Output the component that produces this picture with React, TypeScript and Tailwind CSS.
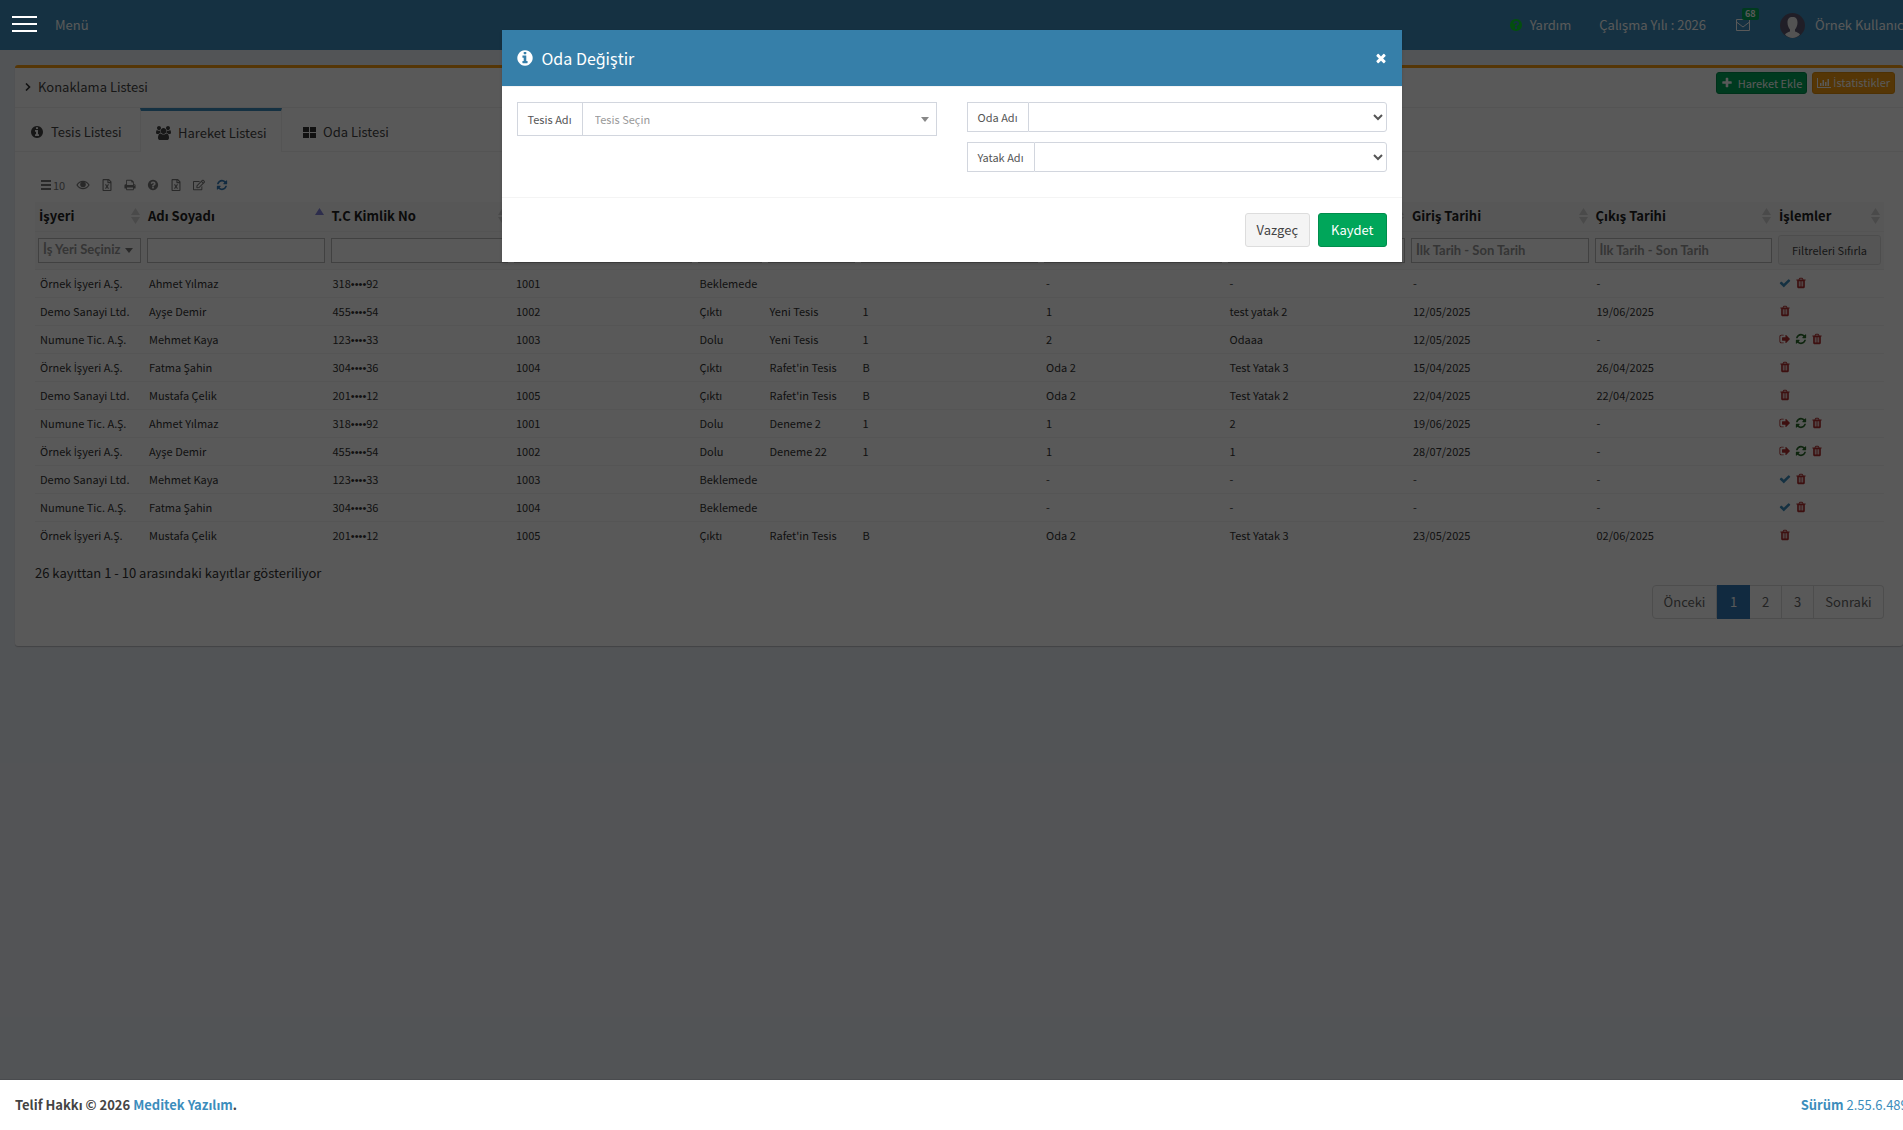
import React from "react";
import { FaRegFileExcel, FaRegEdit } from "react-icons/fa";

const P = {
  refresh:
    "M1639 1056q0 5-1 7-64 268-268 434.5t-478 166.5q-146 0-282.5-55t-243.5-157l-129 129q-19 19-45 19t-45-19-19-45v-448q0-26 19-45t45-19h448q26 0 45 19t19 45-19 45l-137 137q71 66 161 102t187 36q134 0 250-65t186-179q11-17 53-117 8-23 30-23h192q13 0 22.5 9.5t9.5 22.5zm25-800v448q0 26-19 45t-45 19h-448q-26 0-45-19t-19-45 19-45l138-138q-148-137-349-137-134 0-250 65t-186 179q-11 17-53 117-8 23-30 23h-199q-13 0-22.5-9.5t-9.5-22.5v-7q65-268 270-434.5t480-166.5q146 0 284 55.5t245 156.5l130-129q19-19 45-19t45 19 19 45z",
  signOut:
    "M704 1440q0 4 1 20t.5 26.5-3 23.5-10 19.5-20.5 6.5h-320q-119 0-203.5-84.5t-84.5-203.5v-704q0-119 84.5-203.5t203.5-84.5h320q13 0 22.5 9.5t9.5 22.5q0 4 1 20t.5 26.5-3 23.5-10 19.5-20.5 6.5h-320q-66 0-113 47t-47 113v704q0 66 47 113t113 47h312l11.5 1 11.5 3 8 5.5 7 9 2 13.5zm928-544q0 26-19 45l-544 544q-19 19-45 19t-45-19-19-45v-288h-448q-26 0-45-19t-19-45v-384q0-26 19-45t45-19h448v-288q0-26 19-45t45-19 45 19l544 544q19 19 19 45z",
  trash:
    "M704 1376v-704q0-14-9-23t-23-9h-64q-14 0-23 9t-9 23v704q0 14 9 23t23 9h64q14 0 23-9t9-23zm256 0v-704q0-14-9-23t-23-9h-64q-14 0-23 9t-9 23v704q0 14 9 23t23 9h64q14 0 23-9t9-23zm256 0v-704q0-14-9-23t-23-9h-64q-14 0-23 9t-9 23v704q0 14 9 23t23 9h64q14 0 23-9t9-23zm-544-992h448l-48-117q-7-9-17-11h-317q-10 2-17 11zm928 32v64q0 14-9 23t-23 9h-96v948q0 83-47 143.5t-113 60.5h-832q-66 0-113-58.5t-47-141.5v-952h-96q-14 0-23-9t-9-23v-64q0-14 9-23t23-9h309l70-167q15-37 54-63t79-26h320q40 0 79 26t54 63l70 167h309q14 0 23 9t9 23z",
  check:
    "M1671 566q0 40-28 68l-724 724-136 136q-28 28-68 28t-68-28l-136-136-362-362q-28-28-28-68t28-68l136-136q28-28 68-28t68 28l294 295 656-657q28-28 68-28t68 28l136 136q28 28 28 68z",
  times:
    "M1490 1322q0 40-28 68l-136 136q-28 28-68 28t-68-28l-294-294-294 294q-28 28-68 28t-68-28l-136-136q-28-28-28-68t28-68l294-294-294-294q-28-28-28-68t28-68l136-136q28-28 68-28t68 28l294 294 294-294q28-28 68-28t68 28l136 136q28 28 28 68t-28 68l-294 294 294 294q28 28 28 68z",
  plus:
    "M1600 736v192q0 40-28 68t-68 28h-416v416q0 40-28 68t-68 28h-192q-40 0-68-28t-28-68v-416h-416q-40 0-68-28t-28-68v-192q0-40 28-68t68-28h416v-416q0-40 28-68t68-28h192q40 0 68 28t28 68v416h416q40 0 68 28t28 68z",
  info:
    "M1152 1376v-160q0-14-9-23t-23-9h-96v-512q0-14-9-23t-23-9h-320q-14 0-23 9t-9 23v160q0 14 9 23t23 9h96v320h-96q-14 0-23 9t-9 23v160q0 14 9 23t23 9h448q14 0 23-9t9-23zm-128-896v-160q0-14-9-23t-23-9h-192q-14 0-23 9t-9 23v160q0 14 9 23t23 9h192q14 0 23-9t9-23zm640 416q0 209-103 385.5t-279.5 279.5-385.5 103-385.5-103-279.5-279.5-103-385.5 103-385.5 279.5-279.5 385.5-103 385.5 103 279.5 279.5 103 385.5z",
  question:
    "M1024 1376v-192q0-14-9-23t-23-9h-192q-14 0-23 9t-9 23v192q0 14 9 23t23 9h192q14 0 23-9t9-23zm256-672q0-88-55.5-163t-138.5-116-170-41q-243 0-371 213-15 24 8 42l132 100q7 6 19 6 16 0 25-12 53-68 86-92 34-24 86-24 48 0 85.5 26t37.5 59q0 38-20 61t-68 45q-63 28-115.5 86.5t-52.5 125.5v36q0 14 9 23t23 9h192q14 0 23-9t9-23q0-19 21.5-49.5t54.5-49.5q32-18 49-28.5t46-35 44.5-48 28-60.5 12.5-81zm384 192q0 209-103 385.5t-279.5 279.5-385.5 103-385.5-103-279.5-279.5-103-385.5 103-385.5 279.5-279.5 385.5-103 385.5 103 279.5 279.5 103 385.5z",
  print:
    "M448 1536h896v-256h-896v256zm0-640h896v-384h-160q-40 0-68-28t-28-68v-160h-640v640zm1152 64q0-26-19-45t-45-19-45 19-19 45 19 45 45 19 45-19 19-45zm128 0v416q0 13-9.5 22.5t-22.5 9.5h-224v160q0 40-28 68t-68 28h-960q-40 0-68-28t-28-68v-160h-224q-13 0-22.5-9.5t-9.5-22.5v-416q0-79 56.5-135.5t135.5-56.5h64v-544q0-40 28-68t68-28h672q40 0 88 20t76 48l152 152q28 28 48 76t20 88v256h64q79 0 135.5 56.5t56.5 135.5z",
};

function Icon({ name, className }: { name: keyof typeof P; className: string }) {
  return (
    <svg viewBox="0 0 1792 1792" fill="currentColor" aria-hidden="true" className={`shrink-0 ${className}`}>
      <path d={P[name]} />
    </svg>
  );
}

function Users() {
  return (
    <svg viewBox="64 0 1920 1792" fill="currentColor" aria-hidden="true" className="h-[14px] w-[15px] shrink-0">
      <path d="M657 896q-162 5-265 128h-134q-82 0-138-40.5t-56-118.5q0-353 124-353 6 0 43.500 21t97.500 42.500 119 21.500q67 0 133-23-5 37-5 66 0 139 81 256zm1071 637q0 120-73 189.500t-194 69.500h-874q-121 0-194-69.500t-73-189.500q0-53 3.500-103.500t14-109 26.500-108.500 43-97.500 62-81 85.500-53.500 111.500-20q10 0 43 21.500t73 48 107 48 135 21.500 135-21.500 107-48 73-48 43-21.500q61 0 111.500 20t85.500 53.500 62 81 43 97.500 26.500 108.500 14 109 3.500 103.500zm-1024-1277q0 106-75 181t-181 75-181-75-75-181 75-181 181-75 181 75 75 181zm704 384q0 159-112.500 271.500t-271.500 112.500-271.500-112.500-112.500-271.500 112.500-271.500 271.500-112.500 271.500 112.500 112.500 271.500zm576 225q0 78-56 118.500t-138 40.500h-134q-103-123-265-128 81-117 81-256 0-29-5-66 66 23 133 23 59 0 119-21.500t97.500-42.500 43.500-21q124 0 124 353zm-128-609q0 106-75 181t-181 75-181-75-75-181 75-181 181-75 181 75 75 181z" />
    </svg>
  );
}

function Eye() {
  return (
    <svg viewBox="0 0 14 10" aria-hidden="true" className="h-[10px] w-[14px]">
      <path d="M1 5C4 .2 10 .2 13 5 10 9.800 4 9.800 1 5z" fill="none" stroke="currentColor" strokeWidth="1.200" />
      <circle cx="7" cy="4.500" r="2.800" fill="currentColor" />
    </svg>
  );
}

/* The CJK face has no dotted capital I, and its bullet is full width. */
function Txt({ children }: { children: string }) {
  return (
    <>
      {children.split(/(İ|•+)/).map((part, i) => {
        if (part === "İ") return <span key={i} className="font-['Open_Sans','Noto_Sans',sans-serif]">İ</span>;
        if (part.startsWith("•")) return <span key={i} className="font-['Liberation_Sans',sans-serif]">{part}</span>;
        return part;
      })}
    </>
  );
}

type Row = { firm: string; name: string; tc: string; no: string; status: string; cells: string[]; acts: "new" | "done" | "in" };

const W = ["", "", "-", "-", "-", "-"];
const rows: Row[] = [
  { firm: "Örnek İşyeri A.Ş.", name: "Ahmet Yılmaz", tc: "318••••92", no: "1001", status: "Beklemede", cells: W, acts: "new" },
  { firm: "Demo Sanayi Ltd.", name: "Ayşe Demir", tc: "455••••54", no: "1002", status: "Çıktı", cells: ["Yeni Tesis", "1", "1", "test yatak 2", "12/05/2025", "19/06/2025"], acts: "done" },
  { firm: "Numune Tic. A.Ş.", name: "Mehmet Kaya", tc: "123••••33", no: "1003", status: "Dolu", cells: ["Yeni Tesis", "1", "2", "Odaaa", "12/05/2025", "-"], acts: "in" },
  { firm: "Örnek İşyeri A.Ş.", name: "Fatma Şahin", tc: "304••••36", no: "1004", status: "Çıktı", cells: ["Rafet'in Tesis", "B", "Oda 2", "Test Yatak 3", "15/04/2025", "26/04/2025"], acts: "done" },
  { firm: "Demo Sanayi Ltd.", name: "Mustafa Çelik", tc: "201••••12", no: "1005", status: "Çıktı", cells: ["Rafet'in Tesis", "B", "Oda 2", "Test Yatak 2", "22/04/2025", "22/04/2025"], acts: "done" },
  { firm: "Numune Tic. A.Ş.", name: "Ahmet Yılmaz", tc: "318••••92", no: "1001", status: "Dolu", cells: ["Deneme 2", "1", "1", "2", "19/06/2025", "-"], acts: "in" },
  { firm: "Örnek İşyeri A.Ş.", name: "Ayşe Demir", tc: "455••••54", no: "1002", status: "Dolu", cells: ["Deneme 22", "1", "1", "1", "28/07/2025", "-"], acts: "in" },
  { firm: "Demo Sanayi Ltd.", name: "Mehmet Kaya", tc: "123••••33", no: "1003", status: "Beklemede", cells: W, acts: "new" },
  { firm: "Numune Tic. A.Ş.", name: "Fatma Şahin", tc: "304••••36", no: "1004", status: "Beklemede", cells: W, acts: "new" },
  { firm: "Örnek İşyeri A.Ş.", name: "Mustafa Çelik", tc: "201••••12", no: "1005", status: "Çıktı", cells: ["Rafet'in Tesis", "B", "Oda 2", "Test Yatak 3", "23/05/2025", "02/06/2025"], acts: "done" },
];

const heads = ["İşyeri", "Adı Soyadı", "T.C Kimlik No", "Sicil No", "Durum", "Tesis", "Blok", "Oda Adı", "Yatak Adı", "Giriş Tarihi", "Çıkış Tarihi", "İşlemler"];

function Sort({ active }: { active: boolean }) {
  return (
    <svg viewBox="0 0 9 16" aria-hidden="true" className="h-4 w-[9px] shrink-0">
      <path d="M0 7 4.500 0 9 7z" fill={active ? "#8080d9" : "#d4d4d4"} />
      {!active && <path d="M0 9h9l-4.500 7z" fill="#d4d4d4" />}
    </svg>
  );
}

function Act({ name, label, className }: { name: keyof typeof P; label: string; className: string }) {
  return (
    <button type="button" aria-label={label} className={className}>
      <Icon name={name} className="size-3" />
    </button>
  );
}

function Actions({ kind }: { kind: Row["acts"] }) {
  return (
    <div className="flex items-center gap-1">
      {kind === "new" && <Act name="check" label="Onayla" className="text-[#3c8dbc]" />}
      {kind === "in" && <Act name="signOut" label="Çıkış" className="text-[#b03030]" />}
      {kind === "in" && <Act name="refresh" label="Oda Değiştir" className="text-[#2a6a2a]" />}
      <Act name="trash" label="Sil" className="text-[#b03030]" />
    </div>
  );
}

const field = "block h-[25px] w-full border border-[#bbb] bg-white px-1 font-['Lato',sans-serif] text-[13px] font-bold placeholder:text-[#999]";

function Filter({ i }: { i: number }) {
  if (i === 0)
    return (
      <div className="relative">
        <select aria-label="İş Yeri" className={`${field} appearance-none text-[#999]`}>
          <option>İş Yeri Seçiniz</option>
        </select>
        <svg viewBox="0 0 8 5" aria-hidden="true" className="pointer-events-none absolute top-[10px] right-2 h-[5px] w-2">
          <path d="M0 0h8l-4 5z" fill="#777" />
        </svg>
      </div>
    );
  if (i === 11)
    return (
      <button type="button" className="block h-[30px] w-full rounded-[3px] border border-[#ddd] bg-[#f4f4f4] text-[11px] font-normal text-[#444]">
        Filtreleri Sıfırla
      </button>
    );
  return <input aria-label={heads[i]} placeholder={i > 8 ? "İlk Tarih - Son Tarih" : ""} className={field} />;
}

function Header() {
  return (
    <header className="flex h-[50px] items-center justify-between bg-[#3c8dbc] text-[13px] text-white">
      <span className="pl-[55px]">Menü</span>
      <nav className="flex items-center pr-[11px]">
        <a href="#yardim" className="flex items-center gap-[7px]">
          <Icon name="question" className="size-[14px] text-[#0be02c]" />
          Yardım
        </a>
        <span className="ml-7">Çalışma Yılı : 2026</span>
        <a href="#mesajlar" aria-label="Mesajlar" className="relative ml-[30px]">
          <svg viewBox="0 0 14 12" aria-hidden="true" className="h-3 w-[14px]">
            <path d="M.5.5h13v11H.5zM.5 3 7 8l6.500-5" fill="none" stroke="#fff" />
          </svg>
          <span className="absolute -top-[11px] left-[6px] rounded-[2px] bg-[#00a65a] px-[3px] text-[9px] leading-3 font-bold">68</span>
        </a>
        <a href="#profil" className="ml-[30px] flex items-center gap-[10px] whitespace-nowrap">
          <svg viewBox="0 0 25 25" aria-hidden="true" className="size-[25px]">
            <circle cx="12.500" cy="12.500" r="12.500" fill="#5d5870" />
            <path d="M12.500 4c3.500 0 5 2 5 5.500 0 3-1.200 5.500-2.500 7v2c2 .8 4 1.500 5 3-4 4.500-11 4.500-15 0 1-1.500 3-2.200 5-3v-2c-1.300-1.500-2.500-4-2.500-7C7.500 6 9 4 12.500 4z" fill="#eee" />
          </svg>
          Örnek Kullanıcı
        </a>
      </nav>
    </header>
  );
}

const tab = "flex items-center border-t-[3px] pt-[2px] text-[13px] text-[#444]";

function Card() {
  return (
    <section className="m-[15px] rounded-[3px] border-t-[3px] border-[#f39c12] bg-white pb-[27px] shadow-[0_1px_1px_rgba(0,0,0,0.2)]">
      <div className="flex h-10 items-start justify-between border-b border-[#f0f0f0] pr-2">
        <h1 className="flex h-[38px] items-center gap-[7px] pl-[10px] text-[13px] text-[#444]">
          <svg viewBox="0 0 6 8" aria-hidden="true" className="h-2 w-[6px]">
            <path d="m1 .5 3.500 3.500L1 7.500" fill="none" stroke="#333" strokeWidth="1.600" />
          </svg>
          Konaklama Listesi
        </h1>
        <div className="mt-1 flex gap-[5px] text-[11px] text-white">
          <button type="button" className="flex h-[22px] items-center gap-[5px] rounded-[3px] border border-[#008d4c] bg-[#00a65a] px-1">
            <Icon name="plus" className="size-3" />
            Hareket Ekle
          </button>
          <button type="button" className="flex h-[22px] items-center gap-[2px] rounded-[3px] border border-[#e08e0b] bg-[#f39c12] px-1">
            <svg viewBox="0 0 14 10" aria-hidden="true" className="h-[10px] w-[14px]">
              <path d="M0 0h1v9h13v1H0zM3 5h1.500v3H3zM5.500 2H7v6H5.500zM8 4h1.500v4H8zM10.500 1H12v7h-1.500z" fill="#fff" />
            </svg>
            <span><Txt>İstatistikler</Txt></span>
          </button>
        </div>
      </div>

      <div role="tablist" className="flex h-11">
        <button role="tab" type="button" className={`${tab} w-[125px] gap-[7px] border-t-transparent border-b border-b-[#f0f0f0] pl-[15px]`}>
          <Icon name="info" className="size-[14px]" />
          Tesis Listesi
        </button>
        <button role="tab" type="button" aria-selected="true" className={`${tab} w-[142px] gap-[7px] border-r border-l border-t-[#3c8dbc] border-r-[#f0f0f0] border-l-[#f0f0f0] pl-[15px]`}>
          <Users />
          Hareket Listesi
        </button>
        <button role="tab" type="button" className={`${tab} grow gap-[7px] border-t-transparent border-b border-b-[#f0f0f0] pl-[21px]`}>
          <svg viewBox="0 0 13 11" aria-hidden="true" className="h-[11px] w-[13px]">
            <path d="M0 0h6v5H0zM7 0h6v5H7zM0 6h6v5H0zM7 6h6v5H7z" fill="#333" />
          </svg>
          Oda Listesi
        </button>
      </div>

      <div className="pt-6 pr-[19px] pl-5">
        <div className="flex h-[18px] items-center pl-[6px] text-[11px] text-[#777]">
          <button type="button" className="flex items-center gap-[2px]">
            <svg viewBox="0 0 10 10" aria-hidden="true" className="size-[10px]">
              <path d="M0 0h10v2H0zM0 4h10v2H0zM0 8h10v2H0z" fill="currentColor" />
            </svg>
            10
          </button>
          <div className="ml-[11px] flex items-center gap-[11px]">
            <button type="button" aria-label="Sütunlar"><Eye /></button>
            <button type="button" aria-label="Excel"><FaRegFileExcel className="size-3" /></button>
            <button type="button" aria-label="Yazdır"><Icon name="print" className="size-3" /></button>
            <button type="button" aria-label="Bilgi"><Icon name="question" className="size-3" /></button>
            <button type="button" aria-label="Excel aktar"><FaRegFileExcel className="size-3" /></button>
            <button type="button" aria-label="Düzenle"><FaRegEdit className="size-3" /></button>
            <button type="button" aria-label="Yenile" className="text-[#337ab7]"><Icon name="refresh" className="size-3" /></button>
          </div>
        </div>

        <table className="mt-2 w-full table-fixed border-collapse text-left">
          <colgroup>
            {heads.map((h, i) => (
              <col key={h} className={i === 0 || i === 11 ? "w-[109px]" : i === 4 ? "w-[70px]" : i === 5 ? "w-[93px]" : ""} />
            ))}
          </colgroup>
          <thead className="bg-[#f9f9f9]">
            <tr className="h-[29px] border-b border-[#f0f0f0] text-[13px] text-[#222]">
              {heads.map((h, i) => (
                <th key={h} className="px-1 py-0 leading-5 font-bold">
                  <div className="flex items-center justify-between">
                    <span className="whitespace-nowrap"><Txt>{h}</Txt></span>
                    <Sort active={i === 1} />
                  </div>
                </th>
              ))}
            </tr>
            <tr className="h-[38px] border-b border-[#f0f0f0]">
              {heads.map((h, i) => (
                <td key={h} className="px-[3px] py-0">
                  <Filter i={i} />
                </td>
              ))}
            </tr>
          </thead>
          <tbody className="text-[11px] leading-4 text-[#333]">
            {rows.map((r, i) => (
              <tr key={i} className="h-7 border-b border-[#f4f4f4] whitespace-nowrap last:border-0">
                {[r.firm, r.name, r.tc, r.no, r.status, ...r.cells].map((c, j) => (
                  <td key={j} className="px-[5px] py-0"><Txt>{c}</Txt></td>
                ))}
                <td className="px-1 py-0"><Actions kind={r.acts} /></td>
              </tr>
            ))}
          </tbody>
        </table>

        <p className="mt-[14px] text-[13px] leading-5 text-[#333]">26 kayıttan 1 - 10 arasındaki kayıtlar gösteriliyor</p>
        <nav aria-label="Sayfalar" className="mt-[2px] flex justify-end text-[13px] text-[#666]">
          <a href="#onceki" className="flex h-[34px] w-[65px] items-center justify-center rounded-l border border-[#ddd]">Önceki</a>
          <a href="#1" className="flex h-[34px] w-[33px] items-center justify-center bg-[#337ab7] text-white">1</a>
          <a href="#2" className="flex h-[34px] w-8 items-center justify-center border-y border-r border-[#ddd]">2</a>
          <a href="#3" className="flex h-[34px] w-8 items-center justify-center border-y border-r border-[#ddd]">3</a>
          <a href="#sonraki" className="flex h-[34px] w-[70px] items-center justify-center rounded-r border-y border-r border-[#ddd]">Sonraki</a>
        </nav>
      </div>
    </section>
  );
}

function Field({ id, label, children }: { id: string; label: string; children: React.ReactNode }) {
  return (
    <div className="flex">
      <label htmlFor={id} className="flex shrink-0 items-center border border-r-0 border-[#d2d6de] px-[10px] text-[11px] whitespace-nowrap text-[#555]">
        {label}
      </label>
      {children}
    </div>
  );
}

function Modal() {
  return (
    <div role="dialog" aria-modal="true" aria-label="Oda Değiştir" className="w-[900px] max-w-full bg-white shadow-[0_2px_3px_rgba(0,0,0,0.125)]">
      <div className="flex h-14 items-center justify-between bg-[#367fa9] px-[14px] text-white">
        <h2 className="flex items-center gap-2 text-base">
          <Icon name="info" className="size-[18px]" />
          Oda Değiştir
        </h2>
        <button type="button" aria-label="Kapat"><Icon name="times" className="size-[14px]" /></button>
      </div>
      <div className="grid grid-cols-2 gap-x-[30px] border-y border-[#f4f4f4] px-[15px] pt-[15px] pb-[25px]">
        <div>
          <Field id="tesis" label="Tesis Adı">
            <div className="relative grow">
              <select id="tesis" className="block h-[34px] w-full appearance-none border border-[#d2d6de] bg-white px-3 text-[11px] text-[#999]">
                <option>Tesis Seçin</option>
              </select>
              <svg viewBox="0 0 8 5" aria-hidden="true" className="pointer-events-none absolute top-[15px] right-2 h-[5px] w-2">
                <path d="M0 0h8l-4 5z" fill="#888" />
              </svg>
            </div>
          </Field>
        </div>
        <div className="flex flex-col gap-[10px]">
          <Field id="oda" label="Oda Adı">
            <select id="oda" className="h-[30px] grow rounded-r-[3px] border border-[#d2d6de] bg-white text-[#555]" />
          </Field>
          <Field id="yatak" label="Yatak Adı">
            <select id="yatak" className="h-[30px] grow rounded-r-[3px] border border-[#d2d6de] bg-white text-[#555]" />
          </Field>
        </div>
      </div>
      <div className="flex justify-end gap-2 p-[15px] text-[13px]">
        <button type="button" className="h-[34px] rounded-[3px] border border-[#ddd] bg-[#f4f4f4] px-[11px] text-[#444]">Vazgeç</button>
        <button type="button" className="h-[34px] rounded-[3px] border border-[#008d4c] bg-[#00a65a] px-3 text-white">Kaydet</button>
      </div>
    </div>
  );
}

export default function App() {
  return (
    <div className="flex min-h-screen flex-col overflow-hidden bg-[#ecf0f5] font-['Noto_Sans_CJK_SC','Noto_Sans',sans-serif]">
      <div className="relative grow border-b border-[#d2d6de]">
        <div className="-mr-[15px]">
          <Header />
          <main>
            <Card />
          </main>
        </div>
        <div className="absolute inset-x-0 top-0 -bottom-px flex items-start justify-center bg-black/65 pt-[30px]">
          <Modal />
        </div>
        <button type="button" aria-label="Menüyü aç" className="absolute top-4 left-3 flex w-[25px] flex-col gap-[5px]">
          <span className="h-[2px] bg-white" />
          <span className="h-[2px] bg-white" />
          <span className="h-[2px] bg-white" />
        </button>
      </div>
      <footer className="-mr-[15px] flex h-[50px] items-center justify-between bg-white pr-[3px] pl-[15px] text-[13px] text-[#444]">
        <strong>
          Telif Hakkı © 2026 <a href="#meditek" className="text-[#3c8dbc]">Meditek Yazılım</a>.
        </strong>
        <a href="#surum" className="text-[#3c8dbc]"><b>Sürüm</b> 2.55.6.4893</a>
      </footer>
    </div>
  );
}
